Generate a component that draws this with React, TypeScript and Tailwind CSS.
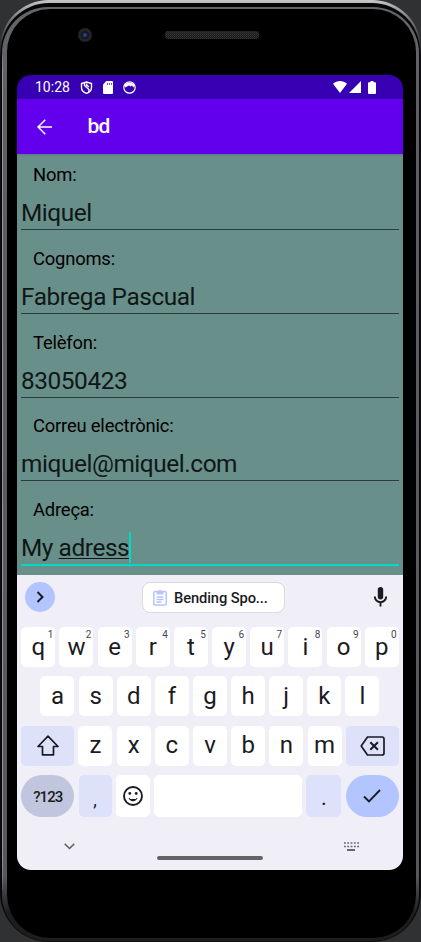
import React from "react";

const font = "font-['Roboto','Noto_Sans',sans-serif]";

function PhoneBody() {
  return (
    <svg className="absolute inset-0" width="421" height="942" viewBox="0 0 421 942" fill="none">
      <defs>
        <linearGradient id="outer" x1="0" y1="0" x2="0" y2="942" gradientUnits="userSpaceOnUse">
          <stop offset="0" stopColor="#c6c8ca" />
          <stop offset="0.02" stopColor="#77797c" />
          <stop offset="0.06" stopColor="#101012" />
          <stop offset="1" stopColor="#0c0c0d" />
        </linearGradient>
        <linearGradient id="rim" x1="0" y1="0" x2="0" y2="942" gradientUnits="userSpaceOnUse">
          <stop offset="0" stopColor="#66676b" />
          <stop offset="0.1" stopColor="#5d5f64" />
          <stop offset="0.93" stopColor="#55575c" />
          <stop offset="0.97" stopColor="#1d1d1e" />
          <stop offset="1" stopColor="#1d1d1e" />
        </linearGradient>
        <linearGradient id="shine" x1="0" y1="40" x2="0" y2="900" gradientUnits="userSpaceOnUse">
          <stop offset="0" stopColor="#94969b" stopOpacity="0" />
          <stop offset="0.04" stopColor="#94969b" />
          <stop offset="0.95" stopColor="#94969b" />
          <stop offset="1" stopColor="#94969b" stopOpacity="0" />
        </linearGradient>
        <pattern id="mesh" width="2" height="2" patternUnits="userSpaceOnUse">
          <rect width="2" height="2" fill="#1c1c1c" />
          <rect width="1" height="1" fill="#343434" />
          <rect x="1" y="1" width="1" height="1" fill="#2c2c2c" />
        </pattern>
      </defs>
      <rect x="0" y="0" width="421" height="942" rx="49" fill="url(#outer)" />
      <rect x="1" y="3" width="419" height="938" rx="48" fill="#060607" />
      <rect x="2" y="7" width="417" height="934" rx="46" fill="url(#rim)" />
      <rect x="7" y="9" width="409" height="929" rx="43" fill="#000" />
      <rect x="2" y="55" width="1" height="835" fill="url(#shine)" />
      <circle cx="85" cy="35" r="7" fill="#242426" />
      <circle cx="85" cy="35" r="4" fill="#11172a" />
      <circle cx="85" cy="35" r="2" fill="#33406d" />
      <rect x="165" y="31" width="94" height="8" rx="3" fill="url(#mesh)" />
    </svg>
  );
}

function StatusBar() {
  return (
    <div className="flex h-6 items-center bg-[#3700b3] pl-[18px] text-white">
      <span className="w-[44px] text-[14px] leading-none">10:28</span>
      <svg className="ml-px" width="13" height="13" viewBox="0 0 13 13" fill="none" stroke="#fff" strokeWidth="1.4">
        <path d="M6.500 1 11.500 2.500V6.500C11.500 9 9.500 11.400 6.500 12.300C3.500 11.400 1.500 9 1.500 6.500V2.500Z" />
        <path d="M4.500 2V4.500L9 8.500V11M7 2.500 6.500 4 9 6" />
      </svg>
      <svg className="ml-[10px]" width="10" height="13" viewBox="0 0 10 13">
        <path fill="#fff" d="M3.300 0H9a1 1 0 0 1 1 1V12a1 1 0 0 1-1 1H1a1 1 0 0 1-1-1V3.500Z" />
        <path stroke="#3700b3" d="M4.500 2V4M6.500 2V4M8.500 2V4" strokeWidth=".7" />
      </svg>
      <svg className="ml-[10px]" width="13" height="13" viewBox="0 0 13 13" fill="none">
        <circle cx="6.500" cy="6.500" r="5.700" stroke="#fff" strokeWidth="1.200" />
        <path fill="#fff" d="M1 4Q6.500-1 12 4L10.500 6.500 9 4.500 7.500 5.500 6 4.500 4 5.500 2.500 6.500Z" />
      </svg>
      <svg className="ml-auto" width="14" height="12" viewBox="0 0 14 12">
        <path fill="#fff" d="M0 2.800C4-.9 10-.9 14 2.800L7 12Z" />
      </svg>
      <svg className="ml-[2px]" width="12" height="12" viewBox="0 0 12 12">
        <path fill="#fff" d="M12 0V12H0Z" />
      </svg>
      <svg className="mr-[27px] ml-[7px]" width="8" height="13" viewBox="0 0 8 13">
        <path fill="#fff" d="M2.500 0h3v1.200H7a1 1 0 0 1 1 1V12a1 1 0 0 1-1 1H1a1 1 0 0 1-1-1V2.200a1 1 0 0 1 1-1h1.500Z" />
      </svg>
    </div>
  );
}

function AppBar() {
  return (
    <div className="flex h-[55px] items-center bg-[#6200ee] pl-[20px] text-white">
      <svg width="15" height="16" viewBox="0 0 15 16" fill="none" stroke="#fff" strokeWidth="1.500">
        <path d="M15 8H1.200M8.300.7 1 8 8.300 15.300" />
      </svg>
      <h1 className="ml-[35.500px] text-[21px] leading-none font-medium tracking-[-0.800px]">bd</h1>
    </div>
  );
}

type FieldProps = { label: string; children: React.ReactNode; active?: boolean };

function Field({ label, children, active }: FieldProps) {
  return (
    <div className="flex h-[83.8px] flex-col px-[4px]">
      <label className="pt-[9px] pl-[12px] text-[18.400px] leading-[24px] tracking-[-0.200px] text-black">{label}</label>
      <div className="mt-[11px] flex h-[29px] items-center text-[24.400px] leading-[29px] tracking-[-0.430px] whitespace-pre text-[#0f1716]">
        {children}
      </div>
      <div className={active ? "mt-[2px] h-[2px] bg-[#03dac5]" : "mt-[2px] h-px bg-[#2b3d3b]"} />
    </div>
  );
}

function Key({ char, hint }: { char: string; hint?: string }) {
  return (
    <div className="relative flex h-[40px] w-[34px] items-center justify-center rounded-[5px] bg-white text-[24px] leading-none text-[#1b1b21]">
      <span className="-mt-px">{char}</span>
      {hint && <span className="absolute top-[3px] right-[2px] text-[10px] leading-none text-[#45464f]">{hint}</span>}
    </div>
  );
}

function Suggestions() {
  return (
    <div className="flex h-[52px] items-start px-[8px] pt-[7px]">
      <div className="flex size-[30px] items-center justify-center rounded-full bg-[#b3c5ff]">
        <svg width="8" height="12" viewBox="0 0 8 12" fill="none" stroke="#1b1b21" strokeWidth="2">
          <path d="m1.500 1 5 5-5 5" />
        </svg>
      </div>
      <div className="ml-[87px] flex h-[31px] w-[143px] items-center rounded-[8px] border border-[#d9d9de] bg-white pl-[10px]">
        <svg width="14" height="17" viewBox="0 0 14 17" fill="none">
          <rect x=".8" y="2.500" width="12.400" height="13.500" rx="1" stroke="#b3c5ff" strokeWidth="1.500" />
          <path fill="#b3c5ff" d="M3.500 2h2a1.600 1.600 0 0 1 3 0h2v3.500h-7Z" />
          <path stroke="#b3c5ff" strokeWidth="1.300" d="M3.500 8h7M3.500 10.500h7M3.500 13h5" />
        </svg>
        <span className="mt-[2px] ml-[7px] text-[14.700px] leading-none font-medium tracking-[-0.100px] whitespace-nowrap text-[#1b1b21]">Bending Spo...</span>
      </div>
      <svg className="mt-[5px] ml-auto mr-[8px]" width="13" height="20" viewBox="0 0 13 20" fill="none">
        <rect x="3.800" y="0" width="5.400" height="12.500" rx="2.700" fill="#1b1b21" />
        <path d="M.8 9.500a5.700 5.700 0 0 0 11.400 0M6.500 15v4.500" stroke="#1b1b21" strokeWidth="1.900" />
      </svg>
    </div>
  );
}

function Keyboard() {
  return (
    <div className="flex h-[295px] flex-col bg-[#f0eff7]">
      <Suggestions />
      <div className="flex flex-col gap-[9.400px] px-[4.300px]">
        <div className="flex justify-between">
          {"qwertyuiop".split("").map((c, i) => (
            <Key key={c} char={c} hint={String((i + 1) % 10)} />
          ))}
        </div>
        <div className="flex justify-between px-[19.200px]">
          {"asdfghjkl".split("").map((c) => (
            <Key key={c} char={c} />
          ))}
        </div>
        <div className="flex justify-between">
          <div className="flex h-[40px] w-[53px] items-center justify-center rounded-[5px] bg-[#dde1f9]">
            <svg width="24" height="21" viewBox="0 0 24 21" fill="none" stroke="#1b1b21" strokeWidth="1.700">
              <path d="M12 1.200 22 11.500H17.500V19.800H6.500V11.500H2Z" strokeLinejoin="round" />
            </svg>
          </div>
          {"zxcvbnm".split("").map((c) => (
            <Key key={c} char={c} />
          ))}
          <div className="flex h-[40px] w-[53px] items-center justify-center rounded-[5px] bg-[#dde1f9]">
            <svg width="25" height="20" viewBox="0 0 25 20" fill="none" stroke="#1b1b21">
              <path d="M7.500 1H22a2 2 0 0 1 2 2V17a2 2 0 0 1-2 2H7.500L1.200 10Z" strokeWidth="1.700" strokeLinejoin="round" />
              <path d="m10.300 6.200 7.600 7.600M17.900 6.200 10.300 13.800" strokeWidth="2" />
            </svg>
          </div>
        </div>
        <div className="flex h-[42px] justify-between">
          <div className="flex w-[53px] items-center justify-center rounded-[21px] bg-[#c0c6dd] text-[15px] leading-none font-medium tracking-[-0.900px] text-[#1b1b21]">
            <span className="mt-[2px]">?123</span>
          </div>
          <div className="flex w-[33px] items-end justify-center rounded-[5px] bg-[#dde1f9] pb-[8px] text-[18px] leading-none text-[#1b1b21]">,</div>
          <div className="flex w-[34px] items-center justify-center rounded-[5px] bg-white">
            <svg width="20" height="20" viewBox="0 0 20 20" fill="none" stroke="#1b1b21">
              <circle cx="10" cy="10" r="9" strokeWidth="1.900" />
              <path d="M5.500 12a4.800 4.800 0 0 0 9 0Z" fill="#1b1b21" stroke="none" />
              <path d="M6.800 12.500h6.400" stroke="#fff" strokeWidth="1" />
              <circle cx="6.800" cy="7.400" r="1.400" fill="#1b1b21" stroke="none" />
              <circle cx="13.200" cy="7.400" r="1.400" fill="#1b1b21" stroke="none" />
            </svg>
          </div>
          <div className="w-[148px] rounded-[5px] bg-white" />
          <div className="flex w-[35px] items-end justify-center rounded-[5px] bg-[#dde1f9] pb-[8px] text-[22px] leading-none text-[#1b1b21]">.</div>
          <div className="flex w-[53px] items-center justify-center rounded-[21px] bg-[#b3c5ff]">
            <svg width="18" height="14" viewBox="0 0 18 14" fill="none" stroke="#1b1b21" strokeWidth="1.900">
              <path d="m1 7.500 5 5L17 1" />
            </svg>
          </div>
        </div>
      </div>
      <div className="mt-[24.800px] flex items-start justify-between pr-[44px] pl-[47px]">
        <svg className="mt-[1px]" width="11" height="7" viewBox="0 0 11 7" fill="none" stroke="#5c5c62" strokeWidth="1.500">
          <path d="M.7.700 5.500 5.500 10.300.7" />
        </svg>
        <div className="mt-[14px] h-[4px] w-[106px] rounded-full bg-[#646467]" />
        <svg width="15" height="9" viewBox="0 0 15 9" fill="none" stroke="#66666b">
          <path d="M0 1h15M0 4.500h15" strokeWidth="1.600" strokeDasharray="1.800 1.500" />
          <path d="M3 8h8" strokeWidth="1.900" />
        </svg>
      </div>
    </div>
  );
}

export default function App() {
  return (
    <div className={`relative h-[942px] w-[421px] overflow-hidden bg-[#303133] pt-[75px] pl-[17px] ${font}`}>
      <PhoneBody />
      <main className="relative flex h-[795px] w-[386px] flex-col overflow-hidden rounded-[14px]">
        <StatusBar />
        <AppBar />
        <section className="h-[421px] overflow-hidden bg-[#698f8b] shadow-[inset_0_2px_2px_-1px_#5b7c82]">
          <Field label="Nom:">Miquel</Field>
          <Field label="Cognoms:">Fabrega Pascual</Field>
          <Field label="Telèfon:">83050423</Field>
          <Field label="Correu electrònic:">miquel@miquel.com</Field>
          <Field label="Adreça:" active>
            My <span className="underline decoration-1 underline-offset-[2px]">adress</span>
            <span className="-mt-px h-[31px] w-[2px] shrink-0 bg-[#03dac5]" />
          </Field>
        </section>
        <Keyboard />
      </main>
    </div>
  );
}
